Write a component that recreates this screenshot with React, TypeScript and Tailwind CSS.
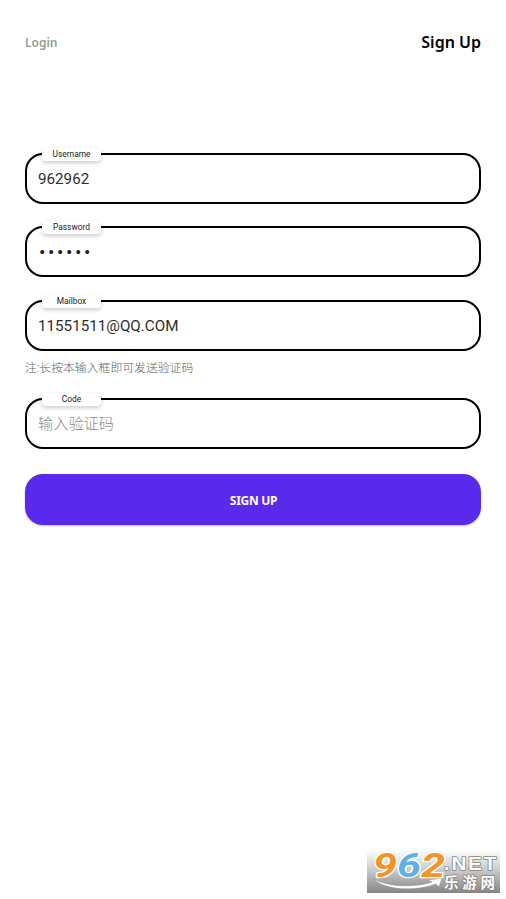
import React from 'react';

interface FieldProps {
  label: string;
  type?: string;
  value?: string;
  placeholder?: string;
  className?: string;
}

const Field: React.FC<FieldProps> = ({ label, type = 'text', value, placeholder, className }) => {
  return (
    <div className={`relative ${className ?? ''}`}>
      <input
        type="text"
        aria-label={label}
        defaultValue={value}
        placeholder={placeholder}
        className={`block h-[51px] w-full rounded-[18px] border-2 border-black bg-white outline-none placeholder:font-light placeholder:text-[#8c8c8c] ${
          type === 'password'
            ? "pl-[12px] pt-[2px] font-['Roboto'] text-[19px] tracking-[2.6px] text-[#222]"
            : "pl-[11px] font-['Roboto','Noto_Sans_CJK_SC',sans-serif] text-[15.2px] text-[#2d2d2d]"
        }`}
      />
      {/* Floating label over the border */}
      <span className="absolute left-[17px] -top-[5px] flex h-[13px] w-[59px] items-center justify-center rounded-[4px] bg-white font-['Roboto',sans-serif] text-[8.4px] leading-none text-[#222] shadow-[0_2px_4px_rgba(0,0,0,0.2)]">
        {label}
      </span>
    </div>
  );
};

const Watermark: React.FC = () => {
  return (
    <svg className="h-[43px] w-[133px]" viewBox="0 0 133 43">
      <defs>
        <linearGradient id="plate" x1="0" y1="0" x2="0" y2="1">
          <stop offset="0" stopColor="#fff" />
          <stop offset="0.5" stopColor="#c6c6c6" />
          <stop offset="1" stopColor="#858585" />
        </linearGradient>
      </defs>
      <rect width="133" height="43" fill="url(#plate)" />
      {/* Swoosh with arrow head */}
      <path
        d="M6 29C18 40 47 42 69 34L72 37L75 28L61 30L65 32C46 38 23 37 6 29Z"
        fill="#fff"
        stroke="#888"
        strokeWidth="0.5"
      />
      <g
        fontFamily="Roboto, sans-serif"
        fontWeight="bold"
        fontStyle="italic"
        fontSize="33"
        stroke="#fff"
        strokeWidth="2.5"
        strokeLinejoin="round"
        paintOrder="stroke"
      >
        <text x="6" y="27" textLength="24" lengthAdjust="spacingAndGlyphs" fill="#f59425">9</text>
        <text x="30" y="27" textLength="24" lengthAdjust="spacingAndGlyphs" fill="#5fb0e6">6</text>
        <text x="54" y="27" textLength="24" lengthAdjust="spacingAndGlyphs" fill="#f59425">2</text>
      </g>
      <g fill="#fff" stroke="#858585" strokeWidth="1.5" strokeLinejoin="round" paintOrder="stroke" fontWeight="bold">
        <text x="77" y="20" fontFamily="Liberation Sans, sans-serif" fontSize="18" letterSpacing="1.5" textLength="54" lengthAdjust="spacingAndGlyphs">
          .NET
        </text>
        <text x="77" y="38" fontFamily="Noto Sans CJK SC, sans-serif" fontSize="14.5" textLength="51">
          乐游网
        </text>
      </g>
    </svg>
  );
};

const App: React.FC = () => {
  return (
    <div className="flex h-[899px] w-[506px] flex-col overflow-hidden bg-white font-['Noto_Sans','Noto_Sans_CJK_SC',sans-serif]">
      {/* Header tabs */}
      <header className="flex h-[85px] items-center justify-between px-[25px]">
        <button className="text-[12px] font-semibold leading-none text-[#9a9a9a]">Login</button>
        <button className="pb-[2px] text-[16px] font-semibold leading-none text-black">Sign Up</button>
      </header>

      <form className="mt-[68px] flex flex-col px-[25px]">
        <Field label="Username" value="962962" />
        <Field label="Password" type="password" value="••••••" className="mt-[22px]" />
        <Field label="Mailbox" value="11551511@QQ.COM" className="mt-[23px]" />
        <p className="mt-2 h-[18px] font-['Roboto','Noto_Sans_CJK_SC',sans-serif] text-[11.85px] leading-[18px] font-light text-[#606060]">
          注:长按本输入框即可发送验证码
        </p>
        <Field label="Code" placeholder="输入验证码" className="mt-[21px]" />
        <button
          type="button"
          className="mt-[25px] h-[51px] rounded-[18px] bg-[#5929ec] pt-[2px] pl-px text-[12px] font-bold tracking-[-0.3px] text-white shadow-[0_1px_2px_rgba(0,0,0,0.25)]"
        >
          SIGN UP
        </button>
      </form>

      <footer className="mt-auto mr-[6px] mb-[6px] flex justify-end">
        <Watermark />
      </footer>
    </div>
  );
};

export default App;
